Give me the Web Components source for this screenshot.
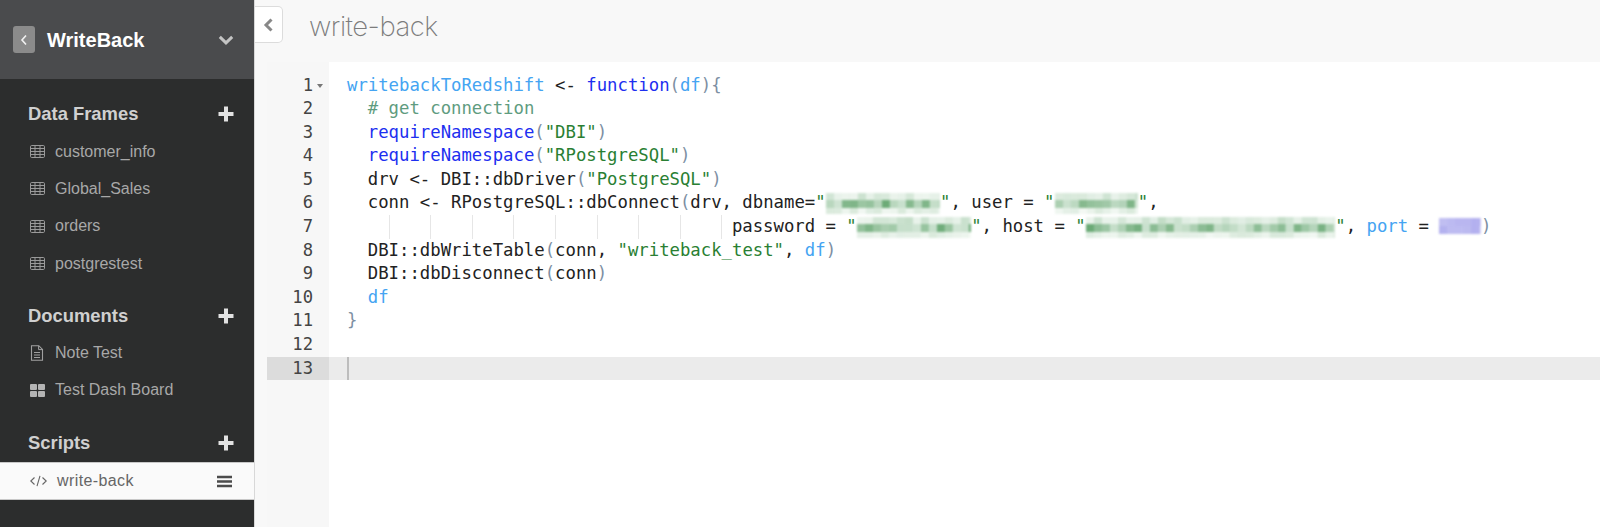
<!DOCTYPE html>
<html><head><meta charset="utf-8"><title>write-back</title>
<style>
html,body{margin:0;padding:0;height:100%;overflow:hidden;background:#f8f8f8}
body{font-family:"Liberation Sans",Arial,sans-serif}
</style></head><body>
<app-shell>
  <app-sidebar slot="side">
    <side-header slot="head">WriteBack</side-header>
    <side-section label="Data Frames">
      <side-item icon="table">customer_info</side-item>
      <side-item icon="table">Global_Sales</side-item>
      <side-item icon="table">orders</side-item>
      <side-item icon="table">postgrestest</side-item>
    </side-section>
    <side-section label="Documents">
      <side-item icon="doc">Note Test</side-item>
      <side-item icon="dash">Test Dash Board</side-item>
    </side-section>
    <side-section label="Scripts">
      <side-item icon="code" active>write-back</side-item>
    </side-section>
  </app-sidebar>
  <main-pane slot="main" title-text="write-back">
    <code-editor>
      <code-line n="1" fold><code-tok k="var">writebackToRedshift</code-tok> &lt;- <code-tok k="kw">function</code-tok><code-tok k="par">(</code-tok><code-tok k="var">df</code-tok><code-tok k="par">){</code-tok></code-line>
      <code-line n="2">  <code-tok k="com"># get connection</code-tok></code-line>
      <code-line n="3">  <code-tok k="kw">requireNamespace</code-tok><code-tok k="par">(</code-tok><code-tok k="str">"DBI"</code-tok><code-tok k="par">)</code-tok></code-line>
      <code-line n="4">  <code-tok k="kw">requireNamespace</code-tok><code-tok k="par">(</code-tok><code-tok k="str">"RPostgreSQL"</code-tok><code-tok k="par">)</code-tok></code-line>
      <code-line n="5">  drv &lt;- DBI::dbDriver<code-tok k="par">(</code-tok><code-tok k="str">"PostgreSQL"</code-tok><code-tok k="par">)</code-tok></code-line>
      <code-line n="6">  conn &lt;- RPostgreSQL::dbConnect<code-tok k="par">(</code-tok>drv, dbname=<code-tok k="str">"</code-tok><pix-block n="11" seed="3"></pix-block><code-tok k="str">"</code-tok>, user = <code-tok k="str">"</code-tok><pix-block n="8" seed="11"></pix-block><code-tok k="str">"</code-tok>,</code-line>
      <code-line n="7"><indent-guides></indent-guides>password = <code-tok k="str">"</code-tok><pix-block n="11" seed="23"></pix-block><code-tok k="str">"</code-tok>, host = <code-tok k="str">"</code-tok><pix-block n="24" seed="37"></pix-block><code-tok k="str">"</code-tok>, <code-tok k="var">port</code-tok> = <pix-block n="4" seed="5" hue="blue"></pix-block><code-tok k="par">)</code-tok></code-line>
      <code-line n="8">  DBI::dbWriteTable<code-tok k="par">(</code-tok>conn, <code-tok k="str">"writeback_test"</code-tok>, <code-tok k="var">df</code-tok><code-tok k="par">)</code-tok></code-line>
      <code-line n="9">  DBI::dbDisconnect<code-tok k="par">(</code-tok>conn<code-tok k="par">)</code-tok></code-line>
      <code-line n="10">  <code-tok k="var">df</code-tok></code-line>
      <code-line n="11"><code-tok k="par">}</code-tok></code-line>
      <code-line n="12"></code-line>
      <code-line n="13" active></code-line>
    </code-editor>
  </main-pane>
</app-shell>
<script>
const ICONS={
 table:`<svg width="15" height="13" viewBox="0 0 15 13"><rect x="0.5" y="0.5" width="14" height="12" rx="1.2" fill="none" stroke="#9a9a9a"/><path d="M0.5 3.5h14M0.5 6.5h14M0.5 9.5h14M5 1v11M10 1v11" stroke="#9a9a9a" fill="none"/></svg>`,
 doc:`<svg width="14" height="16" viewBox="0 0 14 16"><path d="M1.5 .7h7.3l3.7 3.7v10.9h-11z" fill="none" stroke="#a0a0a0" stroke-width="1.1"/><path d="M8.6 .9v3.7h3.7" fill="none" stroke="#a0a0a0"/><path d="M4 7.5h6M4 10h6M4 12.5h6" stroke="#a0a0a0" fill="none"/></svg>`,
 dash:`<svg width="15" height="13" viewBox="0 0 15 13"><rect x="0" y="0" width="7" height="6" rx="1" fill="#b4b4b4"/><rect x="8" y="0" width="7" height="6" rx="1" fill="#b4b4b4"/><rect x="0" y="7" width="7" height="6" rx="1" fill="#b4b4b4"/><rect x="8" y="7" width="7" height="6" rx="1" fill="#b4b4b4"/></svg>`,
 code:`<svg width="17" height="12" viewBox="0 0 17 12"><path d="M4.5 2.5L.8 6l3.7 3.5M12.5 2.5L16.2 6l-3.7 3.5M10 .8L7 11.2" fill="none" stroke="#666" stroke-width="1.1"/></svg>`
};
function def(name,html,extra){
  const t=document.createElement('template');t.innerHTML=html;
  customElements.define(name,class extends HTMLElement{
    constructor(){super();this.attachShadow({mode:'open'}).appendChild(t.content.cloneNode(true));}
    connectedCallback(){extra&&extra.call(this,this.shadowRoot);}
  });
}
def('app-shell',`<style>:host{display:flex;width:1600px;height:527px;overflow:hidden;background:#f8f8f8}
::slotted([slot=side]){flex:0 0 255px}::slotted([slot=main]){flex:1 1 0;min-width:0}</style>
<slot name="side"></slot><slot name="main"></slot>`);
def('app-sidebar',`<style>:host{display:flex;flex-direction:column;background:#2c2d2d;box-sizing:border-box;border-right:1px solid #d8d8d8;height:527px}
.gap{height:1.7px;flex:none}</style>
<slot name="head"></slot><div class="gap"></div><slot></slot>`);
def('side-header',`<style>:host{display:flex;align-items:center;height:79px;flex:none;box-sizing:border-box;padding:0 20px 0 13px;background:#4a4b4d;color:#fff;font:bold 20px/1 "Liberation Sans",sans-serif}
.b{width:22px;height:27px;border-radius:3px;background:#8b8b8b;display:flex;align-items:center;justify-content:center;margin-right:12px}
.t{flex:1}</style>
<span class="b"><svg width="8" height="12" viewBox="0 0 8 12"><path d="M6 1.5L2 6l4 4.5" fill="none" stroke="#f2f2f2" stroke-width="1.6"/></svg></span>
<span class="t"><slot></slot></span>
<svg width="16" height="10" viewBox="0 0 16 10"><path d="M1.8 1.8L8 7.8l6.2-6" fill="none" stroke="#c4c4c4" stroke-width="3"/></svg>`);
def('side-section',`<style>:host{display:block;font-family:"Liberation Sans",sans-serif}
.h{display:flex;align-items:center;justify-content:space-between;height:36px;padding:0 20px .6px 28px;color:#d0d0d0;font-weight:bold;font-size:18.4px;margin-top:15.7px}
svg{display:block}</style>
<div class="h"><span id="l"></span><svg width="16" height="16" viewBox="0 0 16 16"><path d="M8 0.5v15M0.5 8h15" stroke="#e2e2e2" stroke-width="4" fill="none"/></svg></div><slot></slot>`,
function(r){r.getElementById('l').textContent=this.getAttribute('label');});
def('side-item',`<style>:host{display:flex;align-items:center;height:37.3px;box-sizing:border-box;padding:0 22px 0 30px;color:#a8a8a8;font:16px/1 "Liberation Sans",sans-serif}
:host([active]){background:#fafafa;color:#666;border-top:1px solid #c8c8c8;border-bottom:1px solid #c8c8c8;height:38px;margin-top:1px;letter-spacing:.4px}
#i{width:25px;flex:none;display:flex;align-items:center}:host([active]) #i{width:27px}
.t{flex:1}#m{display:none}:host([active]) #m{display:block}</style>
<span id="i"></span><span class="t"><slot></slot></span>
<svg id="m" width="15" height="13" viewBox="0 0 15 13"><path d="M0 2h15M0 6.5h15M0 11h15" stroke="#4c4c4c" stroke-width="2.4" fill="none"/></svg>`,
function(r){r.getElementById('i').innerHTML=ICONS[this.getAttribute('icon')];});
def('main-pane',`<style>:host{display:flex;flex-direction:column;height:527px;background:#f8f8f8}
.top{display:flex;align-items:flex-start;height:62px;flex:none;box-sizing:border-box}
.btn{width:28px;height:37px;margin-top:6px;box-sizing:border-box;background:#fff;border:1.5px solid #dcdcdc;border-left:none;border-radius:0 5px 5px 0;display:flex;align-items:center;justify-content:center}
h1{margin:10px 0 0 26px;font:200 27.5px/1.2 Inter,"Liberation Sans",sans-serif;color:#7c7c7c;letter-spacing:-.5px}
.ed{flex:1;min-height:0;padding-left:12px;display:flex;flex-direction:column}</style>
<div class="top"><span class="btn"><svg width="11" height="14" viewBox="0 0 11 14"><path d="M8.5 1.5L3 7l5.5 5.5" fill="none" stroke="#888" stroke-width="3"/></svg></span><h1 id="t"></h1></div>
<div class="ed"><slot></slot></div>`,
function(r){r.getElementById('t').textContent=this.getAttribute('title-text');});
def('code-editor',`<style>:host{display:flex;flex-direction:column;flex:1;background:linear-gradient(90deg,#f7f7f7 0 62px,#fff 62px);padding-top:11.6px;font:17.3px "DejaVu Sans Mono",monospace;color:#222}</style><slot></slot>`);
def('code-line',`<style>:host{display:flex;height:23.58px;line-height:23.58px;white-space:pre}
.g{flex:0 0 62px;box-sizing:border-box;position:relative;text-align:right;padding-right:16px;color:#444;font-size:17.2px}
:host([active]) .g{background:#dcdcdc}
.c{flex:1;padding-left:18px;position:relative;min-width:0}
:host([active]) .c{background:#ebebeb}
.f{position:absolute;right:6px;top:10px;width:0;height:0;border:3px solid transparent;border-top:4px solid #777;border-bottom:0;display:none}
:host([fold]) .f{display:block}
.cur{position:absolute;left:18px;top:0;bottom:0;width:2px;background:#bdbdbd;display:none}
:host([active]) .cur{display:block}</style>
<span class="g"><span id="n"></span><span class="f"></span></span><span class="c"><span class="cur"></span><slot></slot></span>`,
function(r){r.getElementById('n').textContent=this.getAttribute('n');});
def('code-tok',`<style>:host{display:inline}
:host([k=kw]){color:#1d2ff0}:host([k=var]){color:#45a4f2}:host([k=com]){color:#5f9c80}:host([k=str]){color:#2a7f33}:host([k=par]){color:#7d8fa3}</style><slot></slot>`);
def('indent-guides',`<style>:host{display:inline-flex;height:23.58px;vertical-align:top}
span{display:block;width:4ch;box-sizing:border-box;height:100%}
span.l{border-left:1px solid #e6e6e6}.e{width:1ch}</style>
<span></span><span class="l"></span><span class="l"></span><span class="l"></span><span class="l"></span><span class="l"></span><span class="l"></span><span class="l"></span><span class="l"></span><span class="l e"></span>`);
def('pix-block',`<style>:host{display:inline-block;height:23.58px;vertical-align:top;position:relative}
svg{display:block;width:100%;height:100%;filter:blur(1.1px)}</style><svg id="s" preserveAspectRatio="none"></svg>`,
function(r){
  const n=+this.getAttribute('n');let seed=+this.getAttribute('seed')||1;
  const blue=this.getAttribute('hue')==='blue';
  this.style.width=n+'ch';
  const w=n*10.42,cell=8,col=blue?'#8a86e6':'#4f9a5c';
  const rnd=()=>(seed=(seed*16807)%2147483647)/2147483647;
  for(let i=0;i<5;i++)rnd();
  const rows=blue?[[3,8,.62],[11,8,.62]]:[[2,7,.22],[9,8,.55],[17,6,.14]];
  let h='';
  for(const[y,hh,a]of rows){for(let x=0;x<w;x+=cell){
    const o=a*(blue?.85+rnd()*.3:.45+rnd()*1.1);
    h+=`<rect x="${x}" y="${y}" width="${Math.min(cell,w-x)}" height="${hh}" fill="${col}" fill-opacity="${o.toFixed(2)}"/>`;}}
  const s=r.getElementById('s');s.setAttribute('viewBox',`0 0 ${w} 23.58`);s.innerHTML=h;
});
</script>
</body></html>
